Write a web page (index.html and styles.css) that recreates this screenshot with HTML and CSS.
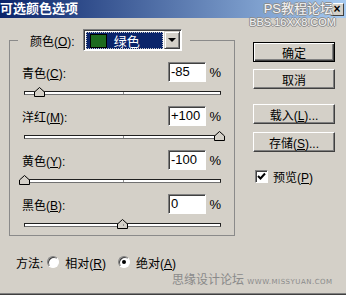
FILE: index.html
```html
<!DOCTYPE html>
<html lang="zh-CN">
<head>
  <meta charset="UTF-8">
  <title>可选颜色选项</title>
  <link rel="stylesheet" href="styles.css">
</head>
<body>
  <div class="dialog">
    <div class="titlebar">
      <span class="title">可选颜色选项</span>
      <span class="close">×</span>
    </div>
    <div class="mark-top">
      <span class="mark-top-name">PS教程论坛</span>
      <span class="mark-top-url">BBS.16XX8.COM</span>
    </div>

    <div class="content">
      <div class="left">
        <fieldset class="group">
          <legend class="group-head">
            <span>颜色(<u>O</u>):</span>
            <div class="select">
              <span class="sel-value"><i class="swatch"></i>绿色</span>
              <span class="sel-arrow"></span>
            </div>
          </legend>

          <div class="channel">
            <div class="channel-row">
              <span class="channel-name">青色(<u>C</u>):</span>
              <span class="num">-85</span>
              <span class="pct">%</span>
            </div>
            <div class="slider">
              <svg class="thumb" style="left: 7.5%" width="11" height="10" viewBox="0 0 11 10"><polygon points="0.5,9.5 0.5,5 5.5,0.5 10.5,5 10.5,9.5" fill="#d4d0c8" stroke="#000"/></svg>
            </div>
          </div>

          <div class="channel">
            <div class="channel-row">
              <span class="channel-name">洋红(<u>M</u>):</span>
              <span class="num">+100</span>
              <span class="pct">%</span>
            </div>
            <div class="slider">
              <svg class="thumb" style="left: 100%" width="11" height="10" viewBox="0 0 11 10"><polygon points="0.5,9.5 0.5,5 5.5,0.5 10.5,5 10.5,9.5" fill="#d4d0c8" stroke="#000"/></svg>
            </div>
          </div>

          <div class="channel">
            <div class="channel-row">
              <span class="channel-name">黄色(<u>Y</u>):</span>
              <span class="num">-100</span>
              <span class="pct">%</span>
            </div>
            <div class="slider">
              <svg class="thumb" style="left: 0%" width="11" height="10" viewBox="0 0 11 10"><polygon points="0.5,9.5 0.5,5 5.5,0.5 10.5,5 10.5,9.5" fill="#d4d0c8" stroke="#000"/></svg>
            </div>
          </div>

          <div class="channel">
            <div class="channel-row">
              <span class="channel-name">黑色(<u>B</u>):</span>
              <span class="num">0</span>
              <span class="pct">%</span>
            </div>
            <div class="slider">
              <svg class="thumb" style="left: 50%" width="11" height="10" viewBox="0 0 11 10"><polygon points="0.5,9.5 0.5,5 5.5,0.5 10.5,5 10.5,9.5" fill="#d4d0c8" stroke="#000"/></svg>
            </div>
          </div>
        </fieldset>

        <div class="method">
          <span class="method-label">方法:</span>
          <span class="radio"></span>
          <span class="radio-text">相对(<u>R</u>)</span>
          <span class="radio checked"></span>
          <span class="radio-text">绝对(<u>A</u>)</span>
        </div>
      </div>

      <div class="buttons">
        <button class="btn btn-default">确定</button>
        <button class="btn btn-cancel">取消</button>
        <button class="btn btn-load">载入(<u>L</u>)...</button>
        <button class="btn btn-save">存储(<u>S</u>)...</button>
        <div class="preview">
          <span class="checkbox">
            <svg width="9" height="9" viewBox="0 0 9 9"><path d="M1 4 L3.5 6.5 L8 1.5" fill="none" stroke="#000" stroke-width="2"/></svg>
          </span>
          <span>预览(<u>P</u>)</span>
        </div>
      </div>
    </div>

    <div class="mark-bottom">思缘设计论坛 <small>WWW.MISSYUAN.COM</small></div>
  </div>
</body>
</html>
```

FILE: styles.css
```css
body {
  margin: 0;
  width: 346px;
  height: 295px;
  overflow: hidden;
  background-color: #d4d0c8;
  font-family: "Liberation Sans", "Noto Sans CJK SC", sans-serif;
  font-size: 12px;
  color: #000;
}
u {
  text-decoration: underline;
}
.dialog {
  position: relative;
  height: 293px;
  border-bottom: 1px solid #808080;
  box-shadow: 0 1px 0 #404040;
}
.titlebar {
  height: 18px;
  display: flex;
  align-items: center;
  background: linear-gradient(to right, #0a246a, #a6caf0);
}
.title {
  color: #fff;
  font-weight: bold;
  font-size: 13px;
  line-height: 18px;
}
.close {
  margin-left: auto;
  margin-right: 2px;
  width: 12px;
  height: 11px;
  background-color: #d4d0c8;
  border: 1px solid;
  border-color: #fff #404040 #404040 #fff;
  font-size: 12px;
  font-weight: bold;
  line-height: 10px;
  text-align: center;
}
.mark-top {
  position: absolute;
  top: 1px;
  right: 10px;
  display: flex;
  flex-direction: column;
  align-items: flex-end;
  color: #f4f4f4;
  text-shadow: 1px 0 0 #8c8c8c, -1px 0 0 #8c8c8c, 0 1px 0 #8c8c8c, 0 -1px 0 #8c8c8c;
}
.mark-top-name {
  font-size: 13px;
  line-height: 15px;
  margin-right: 3px;
}
.mark-top-url {
  font-size: 11px;
  line-height: 13px;
}
.content {
  display: flex;
}
.left {
  width: 235px;
}
.group {
  box-sizing: border-box;
  width: 226px;
  height: 207px;
  margin: 11px 0 0 9px;
  padding: 11px 13px 0 12px;
  border: 1px solid #8a8a8a;
}
.group-head {
  display: flex;
  align-items: center;
  gap: 8px;
  margin-left: -4px;
  padding: 0 8px 0 12px;
}
.select {
  box-sizing: border-box;
  width: 99px;
  height: 22px;
  display: flex;
  padding: 1px;
  border: 1px solid;
  border-color: #808080 #fff #fff #808080;
  box-shadow: inset 1px 1px 0 #404040;
  background-color: #fff;
}
.sel-value {
  flex: 1;
  display: flex;
  align-items: center;
  gap: 7px;
  padding-left: 4px;
  margin: 1px 0 0 1px;
  background-color: #0a246a;
  outline: 1px dotted #c8c8c8;
  outline-offset: -1px;
  color: #fff;
  font-size: 13px;
}
.swatch {
  width: 15px;
  height: 12px;
  background-color: #1d6a1d;
  border: 1px solid #000;
}
.sel-arrow {
  position: relative;
  box-sizing: border-box;
  width: 16px;
  height: 18px;
  margin-left: 1px;
  background-color: #d4d0c8;
  border: 1px solid;
  border-color: #d4d0c8 #404040 #404040 #d4d0c8;
  box-shadow: inset 1px 1px 0 #fff, inset -1px -1px 0 #808080;
}
.sel-arrow::after {
  content: "";
  position: absolute;
  left: 3px;
  top: 6px;
  border-left: 4px solid transparent;
  border-right: 4px solid transparent;
  border-top: 4px solid #000;
}
.channel-row {
  display: flex;
  align-items: center;
  height: 20px;
}
.channel-name {
  flex: 1;
}
.num {
  box-sizing: border-box;
  width: 38px;
  height: 20px;
  padding: 0 2px;
  background-color: #fff;
  border: 1px solid;
  border-color: #808080 #fff #fff #808080;
  box-shadow: inset 1px 1px 0 #404040;
  font-size: 13px;
  line-height: 18px;
}
.pct {
  width: 15px;
  text-align: right;
  font-size: 13px;
}
.slider {
  position: relative;
  box-sizing: border-box;
  height: 4px;
  margin: 9px 0 11px 2px;
  border: 1px solid #202020;
  border-bottom-color: #707070;
  background-color: #fff;
}
.slider::after {
  content: "";
  position: absolute;
  left: 50%;
  top: 0;
  width: 1px;
  height: 2px;
  background-color: #909090;
}
.thumb {
  position: absolute;
  top: -5px;
  margin-left: -6px;
}
.method {
  display: flex;
  align-items: center;
  height: 16px;
  margin: 18px 0 0 16px;
}
.method-label {
  margin-right: 4px;
}
.radio {
  position: relative;
  box-sizing: border-box;
  width: 12px;
  height: 12px;
  margin-right: 6px;
  border-radius: 50%;
  border: 1px solid;
  border-color: #808080 #fff #fff #808080;
  box-shadow: inset 1px 1px 0 #404040;
  background-color: #fff;
}
.radio.checked::after {
  content: "";
  position: absolute;
  left: 3px;
  top: 3px;
  width: 4px;
  height: 4px;
  border-radius: 50%;
  background-color: #000;
}
.radio-text {
  margin-right: 12px;
}
.buttons {
  display: flex;
  flex-direction: column;
  width: 82px;
  margin: 24px 0 0 18px;
}
.btn {
  box-sizing: border-box;
  height: 20px;
  padding: 0;
  background-color: #d4d0c8;
  border: 1px solid;
  border-color: #fff #404040 #404040 #fff;
  box-shadow: inset -1px -1px 0 #808080;
  font-family: inherit;
  font-size: 12px;
  color: #000;
}
.btn-default {
  border-color: #000;
  box-shadow: inset 1px 1px 0 #fff, inset -1px -1px 0 #404040, inset -2px -2px 0 #808080;
}
.btn-cancel {
  margin-top: 7px;
}
.btn-load {
  margin-top: 15px;
}
.btn-save {
  margin-top: 8px;
}
.preview {
  display: flex;
  align-items: center;
  gap: 5px;
  margin: 16px 0 0 2px;
}
.checkbox {
  box-sizing: border-box;
  width: 13px;
  height: 13px;
  display: flex;
  align-items: center;
  justify-content: center;
  background-color: #fff;
  border: 1px solid;
  border-color: #808080 #fff #fff #808080;
  box-shadow: inset 1px 1px 0 #404040;
}
.mark-bottom {
  position: absolute;
  left: 172px;
  top: 270px;
  color: #8a8a8a;
  font-size: 12px;
}
.mark-bottom small {
  font-family: "DejaVu Sans", sans-serif;
  font-size: 7px;
  letter-spacing: 0.5px;
}
```
